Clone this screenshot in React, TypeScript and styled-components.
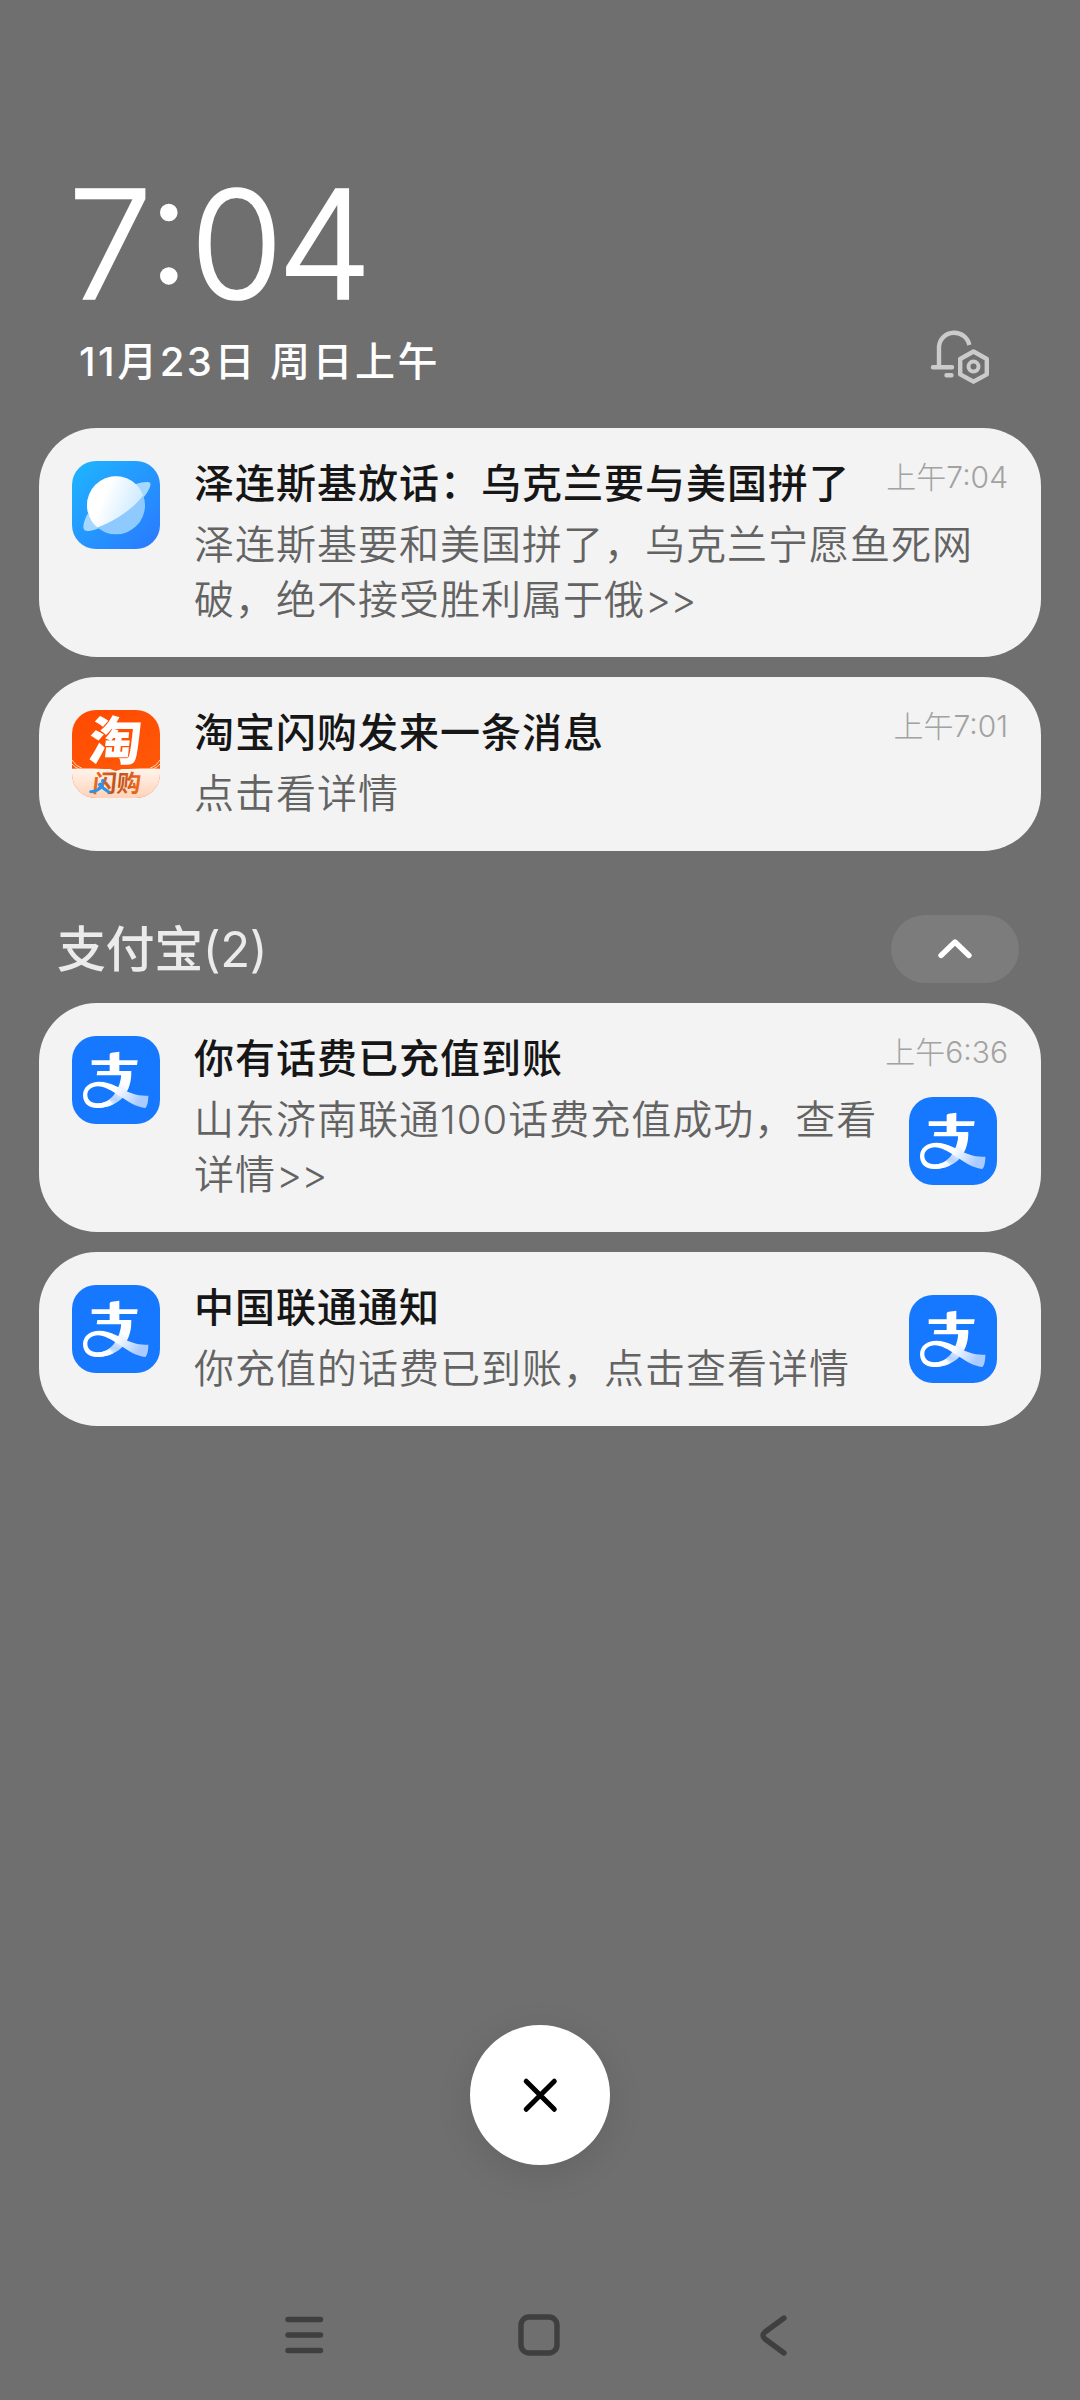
import React from "react";
import styled, { createGlobalStyle } from "styled-components";

const GlobalStyle = createGlobalStyle`
  * { box-sizing: border-box; }
  html, body { margin: 0; background: #6f6f6f; }
  body { font-family: Inter, "Noto Sans CJK SC", sans-serif; }
`;

const Screen = styled.div`
  width: 1080px;
  height: 2400px;
  display: flex;
  flex-direction: column;
  background: #6f6f6f;
  color: #fff;
`;
const Header = styled.header`
  height: 428px;
  padding: 169px 88px 0 68px;
  display: flex;
  justify-content: space-between;
`;
const Clock = styled.div`
  height: 150px;
  line-height: 150px;
  font-size: 151px;
  font-weight: 300;
  -webkit-text-stroke: 1.6px #fff;
`;
const LastDigit = styled.span`
  margin-left: -6px;
`;
const DateLine = styled.div`
  margin-top: 13px;
  padding-left: 11px;
  line-height: 60px;
  font-size: 40px;
  font-weight: 500;
  letter-spacing: 2.5px;
  white-space: pre;
`;
const BellIcon = styled.svg`
  margin-top: 156px;
  width: 64px;
  height: 64px;
`;
const List = styled.section`
  display: flex;
  flex-direction: column;
  gap: 20px;
  padding: 0 39px;
`;
const Card = styled.article`
  display: flex;
  align-items: flex-start;
  padding: 26px 33px 30px;
  border-radius: 58px;
  background: #f3f3f3;
`;
const AppIcon = styled.svg`
  flex: none;
  width: 88px;
  height: 88px;
  margin-top: 7px;
  border-radius: 24px;
`;
const Content = styled.div`
  flex: 1;
  min-width: 0;
  margin-left: 34px;
`;
const Title = styled.h2`
  margin: 0;
  line-height: 54px;
  font-family: "Noto Sans CJK SC", sans-serif;
  font-size: 40px;
  font-weight: 500;
  letter-spacing: 1px;
  color: #161616;
  white-space: nowrap;
`;
const Body = styled.p`
  margin: 9px 0 0;
  line-height: 55px;
  font-size: 40px;
  font-weight: 350;
  letter-spacing: 1px;
  color: #636363;
  white-space: pre;
`;
const Arrows = styled.span`
  letter-spacing: -0.9px;
`;
const Side = styled.div`
  flex: none;
  display: flex;
  flex-direction: column;
  align-items: flex-end;
`;
const Time = styled.time`
  height: 44px;
  line-height: 46px;
  font-size: 30px;
  font-weight: 300;
  color: #a2a2a2;
`;
const LargeIcon = styled(AppIcon)<{ $top: number }>`
  margin: ${(p) => p.$top}px 11px 0 0;
`;
const GroupHeader = styled.div`
  height: 152px;
  padding: 64px 61px 20px 57px;
  display: flex;
  justify-content: space-between;
  align-items: center;
`;
const GroupTitle = styled.h1`
  margin: 0;
  font-size: 49px;
  line-height: 69px;
  font-weight: 500;
  letter-spacing: -0.4px;
  color: #ebebeb;
`;
const GroupCount = styled.span`
  font-weight: 400;
`;
const Collapse = styled.button`
  width: 128px;
  height: 68px;
  padding: 0;
  border: 0;
  border-radius: 34px;
  background: #7c7c7c;
  display: flex;
  align-items: center;
  justify-content: center;
`;
const Footer = styled.footer`
  margin-top: auto;
  display: flex;
  flex-direction: column;
  align-items: center;
`;
const Close = styled.button`
  width: 140px;
  height: 140px;
  padding: 0;
  border: 0;
  border-radius: 50%;
  background: #fff;
  box-shadow: 0 8px 36px rgba(0, 0, 0, 0.1);
  display: flex;
  align-items: center;
  justify-content: center;
`;
const NavBar = styled.nav`
  height: 130px;
  margin-top: 105px;
  margin-right: 2px;
  display: grid;
  grid-template-columns: repeat(3, 235px);
  justify-items: center;
`;
const NavIcon = styled.svg`
  width: 60px;
  height: 60px;
  margin-top: 35px;
  fill: none;
  stroke: #3f3f3f;
  stroke-width: 5.4;
  stroke-linecap: round;
  stroke-linejoin: round;
`;

const BrowserIcon = () => (
  <AppIcon viewBox="36 33 264 264">
    <defs>
      <linearGradient id="sky" x1="0" y1="0" x2="1" y2="1">
        <stop offset="0" stopColor="#1fb6ff" />
        <stop offset="1" stopColor="#2a78ff" />
      </linearGradient>
      <linearGradient id="planet" x1="0" y1="0.2" x2="1" y2="0.6">
        <stop offset="0.3" stopColor="#fff" />
        <stop offset="1" stopColor="#c4e6ff" />
      </linearGradient>
      <clipPath id="upper">
        <path d="M30 30H300L272 97C258 134 226 168 186 194C150 218 108 238 72 243L30 243Z" />
      </clipPath>
    </defs>
    <rect x="36" y="33" width="264" height="264" fill="url(#sky)" />
    <path d="M228 102C240 97 256 95 265 96C272 97 273 102 270 110C262 132 240 158 216 174Z" fill="#a5d8ff" />
    <path d="M82 192C75 206 70 220 70 232C71 242 76 244 88 243C106 240 126 232 146 222Z" fill="#a5d8ff" />
    <circle cx="168" cy="166" r="87" fill="#8fcaff" />
    <circle cx="168" cy="166" r="87" fill="url(#planet)" clipPath="url(#upper)" />
  </AppIcon>
);

const TaobaoIcon = () => (
  <AppIcon viewBox="36 30 264 264">
    <defs>
      <linearGradient id="orange" x1="0" y1="0" x2="0.4" y2="1">
        <stop offset="0" stopColor="#ff4a00" />
        <stop offset="1" stopColor="#ff5a0a" />
      </linearGradient>
      <linearGradient id="cream" x1="0" y1="0" x2="0" y2="1">
        <stop offset="0" stopColor="#fff4ee" />
        <stop offset="1" stopColor="#ffd3b8" />
      </linearGradient>
      <linearGradient id="rust" x1="0" y1="0" x2="1" y2="0">
        <stop offset="0" stopColor="#ee6a1c" />
        <stop offset="0.5" stopColor="#b9521c" />
        <stop offset="1" stopColor="#ef6a1a" />
      </linearGradient>
    </defs>
    <rect x="36" y="30" width="264" height="264" fill="url(#orange)" />
    <path d="M36 206C80 204 120 206 150 207L168 213L186 207C220 206 260 204 300 206V294H36Z" fill="url(#cream)" />
    <path d="M36 180Q46 198 66 205M36 192Q44 202 56 206M300 180Q290 198 270 205M300 192Q292 202 280 206" fill="none" stroke="#ffd9c2" strokeWidth="3" />
    <text transform="translate(82 180) skewX(-6)" fontSize="157" fontWeight="900" fill="#fff" fontFamily="Noto Sans CJK SC, sans-serif">淘</text>
    <text transform="translate(96 275) skewX(-6)" fontSize="72" fontWeight="700" fill="url(#rust)" fontFamily="Noto Sans CJK SC, sans-serif">闪购</text>
    <path d="M92 275Q114 274 124 260L146 276M118 254Q126 248 128 262" fill="none" stroke="#2b93ea" strokeWidth="9" strokeLinecap="round" strokeLinejoin="round" />
    <circle cx="129" cy="243" r="6" fill="#2b93ea" />
  </AppIcon>
);

const AlipayArt = () => (
  <>
    <defs>
      <linearGradient id="leg" x1="0.9" y1="0" x2="0.4" y2="1">
        <stop offset="0.3" stopColor="#fff" />
        <stop offset="0.75" stopColor="#b4d2ff" />
        <stop offset="1" stopColor="#fff" />
      </linearGradient>
      <linearGradient id="tail" x1="0" y1="0" x2="1" y2="0.3">
        <stop offset="0.55" stopColor="#fff" />
        <stop offset="1" stopColor="#a9cbff" />
      </linearGradient>
    </defs>
    <rect x="36" y="33" width="264" height="264" fill="#1677ff" />
    <path d="M95 106H149V88Q150 84 155 83L178 80V106H233L231 120H178V138H214Q214 148 211 160L184 151H110L112 138H149V120H95Z" fill="#fff" />
    <path d="M184 145H214C213 180 202 205 183 223C160 243 130 250 107 249V236C132 235 152 224 164 206C176 190 183 170 184 145Z" fill="url(#leg)" />
    <path d="M112 249C82 249 69 231 69 210C69 186 90 170 118 170C152 170 182 192 215 205C235 212 250 213 265 212C265 228 262 243 256 249C230 247 205 231 180 214C152 195 132 184 114 184C95 184 82 195 82 209C82 226 96 235 116 235C128 235 140 231 148 226L160 238C146 246 130 249 112 249Z" fill="url(#tail)" />
  </>
);

const Chevron = () => (
  <svg width="40" height="28" viewBox="0 0 40 28" fill="none" stroke="#fff" strokeWidth="5.4" strokeLinecap="round" strokeLinejoin="round">
    <path d="M6 20.5L20 7L34 20.5" />
  </svg>
);

export default function App() {
  return (
    <Screen>
      <GlobalStyle />
      <Header>
        <div>
          <Clock>7:0<LastDigit>4</LastDigit></Clock>
          <DateLine>11月23日 周日上午</DateLine>
        </div>
        <BellIcon viewBox="928 326 64 64" fill="none" stroke="#cbcbcb" strokeWidth="4.4">
          <path d="M939 367V347.500A15.300 15 0 0 1 969.300 346" />
          <path d="M933 368.300H952M946.500 376.300H951.500" strokeLinecap="round" />
          <path d="M973.500 352.500L986.800 360V375.300L973.500 382.700L960.200 375.300V360Z" strokeLinejoin="round" />
          <circle cx="973.500" cy="367.600" r="5" strokeWidth="4" />
        </BellIcon>
      </Header>
      <List>
        <Card>
          <BrowserIcon />
          <Content>
            <Title>泽连斯基放话：乌克兰要与美国拼了</Title>
            <Body>{"泽连斯基要和美国拼了，乌克兰宁愿鱼死网\n破，绝不接受胜利属于俄"}<Arrows>{">>"}</Arrows></Body>
          </Content>
          <Side><Time>上午7:04</Time></Side>
        </Card>
        <Card>
          <TaobaoIcon />
          <Content>
            <Title>淘宝闪购发来一条消息</Title>
            <Body>点击看详情</Body>
          </Content>
          <Side><Time>上午7:01</Time></Side>
        </Card>
      </List>
      <GroupHeader>
        <GroupTitle>支付宝<GroupCount>(2)</GroupCount></GroupTitle>
        <Collapse aria-label="collapse"><Chevron /></Collapse>
      </GroupHeader>
      <List>
        <Card>
          <AppIcon viewBox="36 33 264 264"><AlipayArt /></AppIcon>
          <Content>
            <Title>你有话费已充值到账</Title>
            <Body>{"山东济南联通100话费充值成功，查看\n详情"}<Arrows>{">>"}</Arrows></Body>
          </Content>
          <Side>
            <Time>上午6:36</Time>
            <LargeIcon $top={24} viewBox="36 33 264 264"><AlipayArt /></LargeIcon>
          </Side>
        </Card>
        <Card>
          <AppIcon viewBox="36 33 264 264"><AlipayArt /></AppIcon>
          <Content>
            <Title>中国联通通知</Title>
            <Body>你充值的话费已到账，点击查看详情</Body>
          </Content>
          <Side>
            <LargeIcon $top={17} viewBox="36 33 264 264"><AlipayArt /></LargeIcon>
          </Side>
        </Card>
      </List>
      <Footer>
        <Close aria-label="close">
          <svg width="40" height="40" viewBox="0 0 40 40" stroke="#000" strokeWidth="5" strokeLinecap="round">
            <path d="M6.200 6.200L34.300 34.300M34.300 6.200L6.200 34.300" />
          </svg>
        </Close>
        <NavBar>
          <NavIcon viewBox="0 0 60 60"><path d="M14 14.500H46.500M14 30H46.500M14 45.500H46.500" /></NavIcon>
          <NavIcon viewBox="0 0 60 60"><rect x="12" y="12" width="36" height="36" rx="8" /></NavIcon>
          <NavIcon viewBox="0 0 60 60"><path d="M40 13L21 27Q17 30.500 21 34L40 48" /></NavIcon>
        </NavBar>
      </Footer>
    </Screen>
  );
}
